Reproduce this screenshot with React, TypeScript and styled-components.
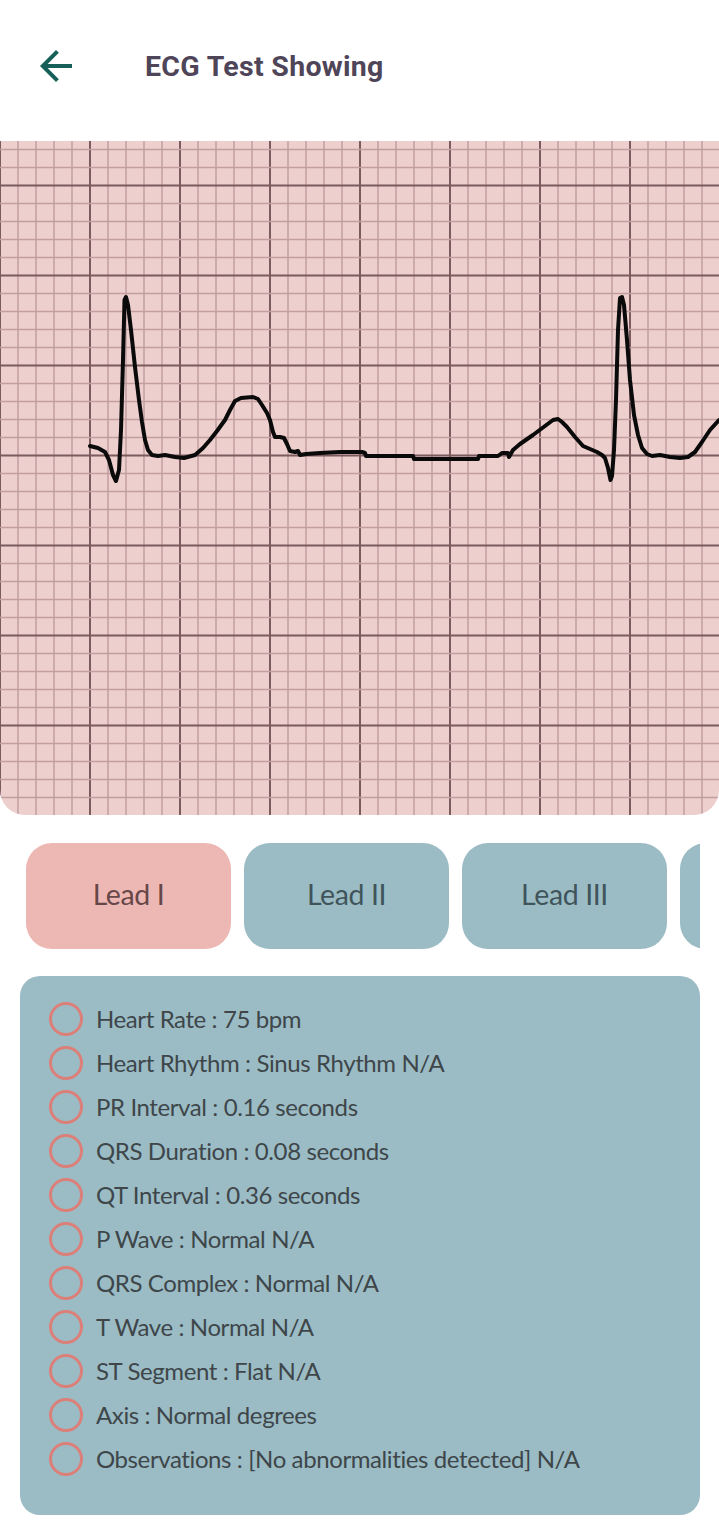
import React from "react";
import styled, { createGlobalStyle } from "styled-components";

const GlobalStyle = createGlobalStyle`
  html, body { margin: 0; padding: 0; background: #ffffff; }
  * { box-sizing: border-box; }
`;

const Page = styled.div`
  width: 719px;
  min-height: 1535px;
  background: #ffffff;
  overflow: hidden;
`;

const Header = styled.header`
  height: 141px;
  display: flex;
  align-items: center;
  padding: 0 0 9px 32px;
`;

const BackButton = styled.button`
  width: 48px;
  height: 48px;
  padding: 0;
  border: none;
  background: transparent;
  display: flex;
  align-items: center;
  justify-content: center;
  color: #17605a;
  cursor: pointer;
`;

const Title = styled.h1`
  margin: 0 0 0 65px;
  font-family: Roboto, "Liberation Sans", sans-serif;
  font-weight: 700;
  font-size: 28.5px;
  color: #4f4558;
  letter-spacing: 0.3px;
`;

const Paper = styled.div`
  height: 674px;
  background: #edcfce;
  border-radius: 0 0 25px 25px;
  overflow: hidden;
`;

const PaperSvg = styled.svg`
  display: block;
  width: 719px;
  height: 674px;
`;

const LeadRow = styled.div`
  width: 700px;
  display: flex;
  gap: 13px;
  padding: 28px 0 0 26px;
  overflow: hidden;
`;

const LeadButton = styled.button<{ $active?: boolean }>`
  flex: 0 0 205px;
  height: 106px;
  border: none;
  border-radius: 26px;
  background: ${(p) => (p.$active ? "#edb7b4" : "#9bbcc4")};
  color: ${(p) => (p.$active ? "#674748" : "#40545b")};
  font-family: Lato, "Open Sans", sans-serif;
  font-size: 28.5px;
  font-weight: 400;
  letter-spacing: -0.4px;
  display: flex;
  align-items: center;
  justify-content: center;
  padding: 0 0 4px;
  white-space: nowrap;
  overflow: hidden;
`;

const InfoCard = styled.section`
  margin: 27px 19px 20px 20px;
  background: #9bbcc5;
  border-radius: 20px;
  padding: 21px 0 34px 29px;
  display: flex;
  flex-direction: column;
`;

const InfoRow = styled.div`
  height: 44px;
  display: flex;
  align-items: center;
  gap: 13px;
`;

const Bullet = styled.span`
  width: 34px;
  height: 34px;
  border-radius: 50%;
  border: 3px solid #dc7f79;
  flex: 0 0 34px;
`;

const InfoText = styled.span`
  font-family: Lato, "Open Sans", sans-serif;
  font-size: 24px;
  font-weight: 400;
  letter-spacing: -0.4px;
  color: #3e464a;
  white-space: nowrap;
  padding-bottom: 2px;
`;

const leads = ["Lead I", "Lead II", "Lead III", "aVR"];

const items = [
  "Heart Rate : 75 bpm",
  "Heart Rhythm : Sinus Rhythm N/A",
  "PR Interval : 0.16 seconds",
  "QRS Duration : 0.08 seconds",
  "QT Interval : 0.36 seconds",
  "P Wave : Normal N/A",
  "QRS Complex : Normal N/A",
  "T Wave : Normal N/A",
  "ST Segment : Flat N/A",
  "Axis : Normal degrees",
  "Observations : [No abnormalities detected] N/A",
];

const wavePoints: [number, number][] = [
  [90, 446], [98, 448], [105, 452], [109, 460], [113, 475], [116, 481], [119, 470],
  [121, 430], [123, 360], [124.5, 300], [126, 297], [128, 305], [131, 330], [135, 367],
  [139, 400], [142, 422], [145, 440], [148, 450], [152, 455], [158, 456], [165, 455],
  [175, 457], [184, 458], [195, 455], [203, 448], [210, 440], [217, 431], [225, 420],
  [230, 410], [235, 401], [241, 398], [253, 397], [258, 399], [262, 405], [267, 413],
  [270, 420], [273, 432], [275, 437], [280, 437], [284, 438], [287, 444], [290, 451],
  [295, 452], [298, 451], [300, 455], [306, 454], [320, 453], [340, 452], [362, 452],
  [365, 453], [366, 456], [413, 456], [414, 459], [478, 459], [479, 456], [498, 456],
  [502, 453], [508, 453], [509, 457], [513, 450], [520, 444], [533, 435], [545, 426],
  [553, 420], [558, 419], [562, 422], [567, 427], [575, 437], [583, 446], [590, 449],
  [597, 452], [602, 455], [605, 458], [608, 468], [610.5, 480], [612, 476], [614, 450],
  [616, 400], [618, 330], [620, 298], [622, 297], [624, 305], [627, 340], [630, 380],
  [634, 415], [638, 435], [642, 448], [647, 454], [652, 456], [660, 455], [670, 457],
  [680, 458], [688, 457], [695, 452], [702, 442], [710, 430], [719, 420],
];

const wavePath = wavePoints
  .map(([x, y], i) => `${i === 0 ? "M" : "L"}${x},${y}`)
  .join(" ");

function EcgPaper() {
  const top = 141;
  const bottom = 815;
  const vLines: React.ReactNode[] = [];
  for (let x = 0; x <= 719; x += 18) {
    const major = x % 90 === 0;
    vLines.push(
      <line
        key={`v${x}`}
        x1={x}
        x2={x}
        y1={top}
        y2={bottom}
        stroke={major ? "#7b5b5d" : "#c29e9f"}
        strokeWidth={major ? 2 : 1.5}
      />
    );
  }
  const hLines: React.ReactNode[] = [];
  for (let y = 131.5; y <= bottom; y += 18) {
    const major = Math.abs(((y - 185.5) % 90 + 90) % 90) < 0.01;
    hLines.push(
      <line
        key={`h${y}`}
        x1={0}
        x2={719}
        y1={y}
        y2={y}
        stroke={major ? "#7b5b5d" : "#c29e9f"}
        strokeWidth={major ? 2 : 1.5}
      />
    );
  }
  return (
    <Paper>
      <PaperSvg viewBox={`0 ${top} 719 674`}>
        {vLines}
        {hLines}
        <path
          d={wavePath}
          fill="none"
          stroke="#0a0a0a"
          strokeWidth={4}
          strokeLinejoin="round"
          strokeLinecap="round"
        />
      </PaperSvg>
    </Paper>
  );
}

export default function App() {
  return (
    <Page>
      <GlobalStyle />
      <Header>
        <BackButton aria-label="Back">
          <svg width="48" height="48" viewBox="0 0 24 24" fill="currentColor">
            <path d="M20 11H7.83l5.59-5.59L12 4l-8 8 8 8 1.41-1.41L7.83 13H20v-2z" />
          </svg>
        </BackButton>
        <Title>ECG Test Showing</Title>
      </Header>
      <EcgPaper />
      <LeadRow>
        {leads.map((l, i) => (
          <LeadButton key={l} $active={i === 0}>
            {l}
          </LeadButton>
        ))}
      </LeadRow>
      <InfoCard>
        {items.map((t) => (
          <InfoRow key={t}>
            <Bullet />
            <InfoText>{t}</InfoText>
          </InfoRow>
        ))}
      </InfoCard>
    </Page>
  );
}
